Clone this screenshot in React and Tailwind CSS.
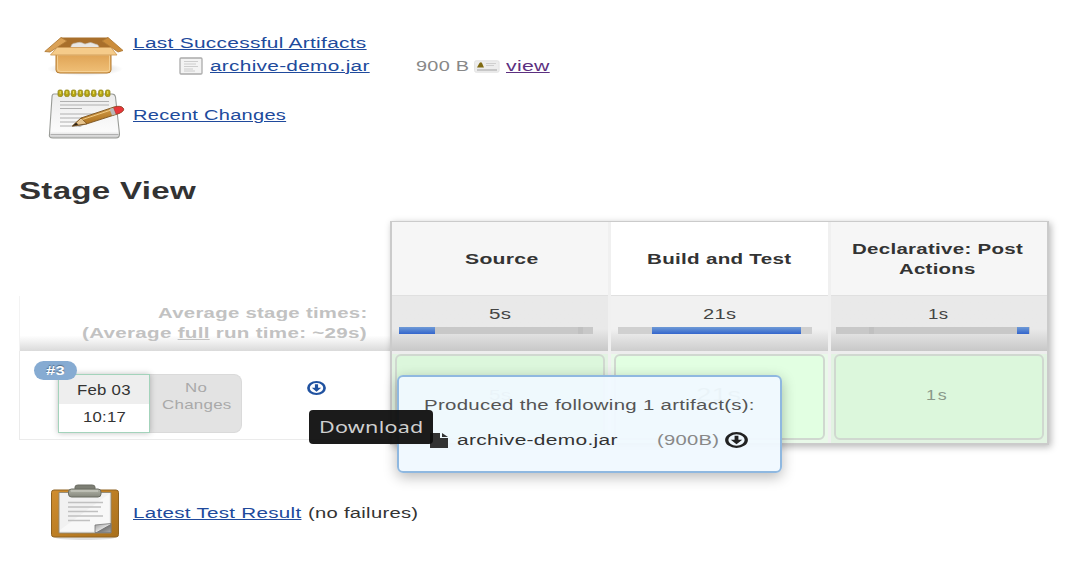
import { useLayoutEffect, useRef, useState } from "react";

// Text stretched horizontally so that it fills the width given in its classes.
function Wide({ className = "", children }) {
  const outer = useRef(null);
  const inner = useRef(null);
  const [k, setK] = useState(1);
  useLayoutEffect(() => {
    const natural = inner.current.offsetWidth;
    if (natural) setK(outer.current.offsetWidth / natural);
  }, []);
  return (
    <span ref={outer} className={"block shrink-0 whitespace-nowrap " + className}>
      <span ref={inner} className="inline-block origin-left whitespace-nowrap" style={{ transform: `scaleX(${k})` }}>
        {children}
      </span>
    </span>
  );
}

function BoxIcon() {
  return (
    <svg width="82" height="42" viewBox="0 0 82 42" className="block">
      <defs>
        <linearGradient id="bx" x1="0" y1="0" x2="0" y2="1">
          <stop offset="0" stopColor="#dfa354" />
          <stop offset="1" stopColor="#f0c078" />
        </linearGradient>
        <radialGradient id="bs">
          <stop offset="0" stopColor="#999" stopOpacity=".6" />
          <stop offset="1" stopColor="#999" stopOpacity="0" />
        </radialGradient>
      </defs>
      <ellipse cx="41" cy="34" rx="38" ry="7" fill="url(#bs)" />
      <path d="M17 3H64L68 18H13Z" fill="#a96f2b" stroke="#a8712d" />
      <path d="M27 14Q26 8 32 8Q36 6 41 9Q47 6 51 9Q56 9 55 16H27Z" fill="#e9e7e4" stroke="#c0b6a8" strokeWidth=".6" />
      <path d="M17 2.500L.8 16.500L6 17L23 6Z" fill="#dba257" stroke="#b07a36" strokeWidth=".9" />
      <path d="M64 2.500L79 15.500L74 17L58 6Z" fill="#cc8d3b" stroke="#b07a36" strokeWidth=".9" />
      <path d="M12 19H67V35Q67 38 63 38H16Q12 38 12 35Z" fill="url(#bx)" stroke="#b47a30" />
      <path d="M13.500 20H65.500V35Q65 36.500 62 36.500H17Q13.500 36.500 13.500 34Z" fill="none" stroke="#f7d59c" strokeWidth=".8" />
      <path d="M13 12.500H67L73 20H6.500Z" fill="#f5cb8a" stroke="#d09c58" strokeWidth=".9" />
    </svg>
  );
}

function NotepadIcon() {
  return (
    <svg width="80" height="52" viewBox="0 0 80 52" className="block">
      <defs>
        <linearGradient id="np" x1="0" y1="0" x2="0" y2="1">
          <stop offset="0" stopColor="#ececec" />
          <stop offset=".85" stopColor="#fbfbfb" />
          <stop offset="1" stopColor="#c8c8c8" />
        </linearGradient>
        <linearGradient id="pc" x1="0" y1="0" x2="0.3" y2="1">
          <stop offset="0" stopColor="#e0ad5a" />
          <stop offset="1" stopColor="#a86b18" />
        </linearGradient>
      </defs>
      <path d="M8 5H66Q69 5 69.500 8L73.500 45Q73.500 49 70 49H7Q2.500 49 3.500 45L6 8Q6 5 8 5Z" fill="url(#np)" stroke="#999b97" strokeWidth="1.100" />
      <path d="M4.500 45.500H72.500" stroke="#b0b0b0" strokeWidth="1" />
      <path d="M14 12.500H63M14 16H63M14 19.500H36M14 25H63M14 29H50M14 33H42M14 37H31" stroke="#b0b0b0" strokeWidth="1.100" />
      {[12, 18.700, 25.400, 32.100, 38.800, 45.500, 52.600, 59.500].map((x) => (
        <g key={x}>
          <rect x={x} y="1" width="4.500" height="6.500" rx="1.500" fill="#b6a512" stroke="#91851c" strokeWidth=".8" />
          <path d={`M${x + 2.200} 2V5`} stroke="#ece36a" strokeWidth="1" />
        </g>
      ))}
      <path d="M28 37L44 33L34 38Z" fill="#777" opacity=".5" />
      <path d="M26.500 37L35 29L68 18Q75 16 77.500 19.500Q78.500 22 73 24.500L41 34.800Z" fill="url(#pc)" stroke="#7a5420" strokeWidth=".9" />
      <path d="M26.500 37L35 29L41 34.800Z" fill="#e6c48e" stroke="#6b4411" strokeWidth=".7" />
      <path d="M26.500 37L30 33.700L32.500 35.600Z" fill="#2b2116" />
      <path d="M36.500 30.500L65 21" stroke="#f0c983" strokeWidth="1" />
      <path d="M63.500 20L67.500 18.700L70.500 25L66 26.500Z" fill="#b9b9b9" />
      <path d="M67.500 18.400Q75 16.200 77.300 19.500Q78.500 22 73 24.300L70 25Z" fill="#e8363a" stroke="#a33" strokeWidth=".5" />
    </svg>
  );
}

function ClipboardIcon() {
  return (
    <svg width="72" height="57" viewBox="0 0 72 57" className="block">
      <defs>
        <linearGradient id="cb" x1="0" y1="0" x2="1" y2="1">
          <stop offset="0" stopColor="#d08d2e" />
          <stop offset="1" stopColor="#a9701c" />
        </linearGradient>
        <linearGradient id="cl" x1="0" y1="0" x2="0" y2="1">
          <stop offset="0" stopColor="#b4b6aa" />
          <stop offset="1" stopColor="#85877c" />
        </linearGradient>
        <linearGradient id="fold" x1="0" y1="0" x2="1" y2="1">
          <stop offset="0" stopColor="#999" />
          <stop offset=".5" stopColor="#ddd" />
          <stop offset=".55" stopColor="#777" />
          <stop offset="1" stopColor="#aaa" />
        </linearGradient>
      </defs>
      <ellipse cx="36" cy="53.500" rx="30" ry="2.500" fill="#ccc" opacity=".6" />
      <rect x="2.500" y="6" width="67" height="47" rx="2.500" fill="url(#cb)" stroke="#8f6221" />
      <path d="M10 8.500H62V49H10Z" fill="#f1f1f1" stroke="#8f8876" strokeWidth=".9" />
      <path d="M11 46L60 10V47H11Z" fill="#fbfbfb" opacity=".7" />
      <path d="M19 18.500H54M19 23H52M19 27.500H49M19 32H54M19 36.500H41" stroke="#c0c0c0" strokeWidth="1.300" />
      <path d="M46 41L62 39.500V48.500H46Z" fill="url(#fold)" stroke="#777" strokeWidth=".8" />
      <path d="M26 8V3Q26 1 29 1H43Q46 1 46 3V8Z" fill="#7c7e74" stroke="#6b6d63" />
      <rect x="19.500" y="5" width="32.500" height="8" rx="3" fill="url(#cl)" stroke="#6b6d63" />
      <path d="M22 7H49" stroke="#d2d3ca" strokeWidth="1" />
    </svg>
  );
}

function TextFileIcon() {
  return (
    <svg width="25" height="19" viewBox="0 0 25 19" className="block">
      <rect x="1" y="1" width="22" height="16" rx="1" fill="#f3f3f3" stroke="#ababab" strokeWidth="1.300" />
      <path d="M5 4.500H19M5 7H17M5 9.500H19M5 12H14M5 14H16" stroke="#c8c8c8" strokeWidth=".9" />
    </svg>
  );
}

function FingerprintIcon() {
  return (
    <svg width="26" height="13" viewBox="0 0 26 13" className="block">
      <rect x=".6" y=".8" width="24.500" height="11.400" rx="1.500" fill="#ededed" stroke="#e2e2e2" />
      <path d="M3 7.500L5.500 3Q7 1.500 8 3L10 7.500Z" fill="#7f6a12" />
      <path d="M12 3.500H22M12 5.500H20" stroke="#cfcfcf" />
      <path d="M3 10H23" stroke="#adadad" strokeWidth="1.200" />
    </svg>
  );
}

function DownIcon({ className }) {
  return (
    <svg viewBox="0 0 24 24" preserveAspectRatio="none" className={"block shrink-0 " + className}>
      <circle cx="12" cy="12" r="10.200" fill="none" stroke="currentColor" strokeWidth="3.400" />
      <path d="M10 5.500H14V11.500H18L12 18.300L6 11.500H10Z" fill="currentColor" />
    </svg>
  );
}

const underlined = "[&>span]:underline [&>span]:decoration-1 [&>span]:underline-offset-1";
const link = "text-[#204a9c] " + underlined;

function Meter({ className, bar, mark, alt }) {
  return (
    <div className={"mr-auto flex h-[7px] w-[194px] " + className + (alt ? " bg-[#d0d0d0]" : " bg-[#c8c8c8]")}>
      {mark && <div className={"h-[7px] w-[5px] bg-[#c0c0c0] " + mark} />}
      <div className={"h-[7px] bg-linear-to-b from-[#6f9ad6] to-[#3465cc] " + bar} />
    </div>
  );
}

function Column({ title, time, meter, alt, cell, last }) {
  return (
    <div className={"flex flex-col " + (last ? "w-[217px]" : "w-[220px] border-r-[3px] border-[#f0f0f0]")}>
      <div className={"flex h-[74px] flex-col items-center justify-center border-b border-[#e0e0e0] pt-px font-bold text-[#333] " + (alt ? "bg-white" : "bg-[#f6f6f6]")}>
        {title}
      </div>
      <div className={"flex h-[55px] flex-col bg-linear-to-b from-60% " + (alt ? "from-[#f1f1f1] to-[#cdcdcd]" : "from-[#e9e9e9] to-[#c8c8c8]")}>
        <div className="flex h-[31px] items-center justify-center pt-1 text-[#444]">{time}</div>
        {meter}
      </div>
      <div className={"h-[92px] border-t-[3px] border-[#ededed] px-[3px] pb-[3px] " + (alt ? "bg-[#e9f9e9]" : "bg-[#e2f3e2]")}>
        <div className={"flex h-[86px] items-center justify-center rounded-md border-2 border-[#d0d8d0] pb-[4px] text-[#8a998a] " + (alt ? "bg-[#e2ffe2]" : "bg-[#dcf7dc]")}>
          {cell}
        </div>
      </div>
    </div>
  );
}

export default function App() {
  return (
    <div className="relative h-[561px] w-[1084px] overflow-hidden bg-white font-['Liberation_Sans',Arial,sans-serif] text-[14px] leading-5 tracking-[0.2px] text-[#333]">
      <div className="flex h-[86px] pt-[33px]">
        <div className="w-[133px] pt-[2px] pl-[44px]"><BoxIcon /></div>
        <div>
          <Wide className={"w-[234px] " + link}>Last Successful Artifacts</Wide>
          <div className="flex items-center pt-[3px]">
            <div className="w-[77px] pl-[46px]"><TextFileIcon /></div>
            <Wide className={"w-[159px] " + link}>archive-demo.jar</Wide>
            <Wide className="ml-[47px] w-[54px] text-[#888]">900 B</Wide>
            <div className="w-[36px] pl-1"><FingerprintIcon /></div>
            <Wide className={"w-[44px] text-[#5c3080] " + underlined}>view</Wide>
          </div>
        </div>
      </div>
      <div className="flex h-[88px] pt-[3px]">
        <div className="w-[133px] pl-[46px]"><NotepadIcon /></div>
        <div className="pt-[16px]"><Wide className={"w-[153px] " + link}>Recent Changes</Wide></div>
      </div>
      <h2 className="h-[47px] pl-[19px] text-[23px] leading-[34px] font-bold">
        <Wide className="w-[177px]">Stage View</Wide>
      </h2>

      <div className="flex h-[224px] pl-[19px]">
        <div className="w-[371px] pt-[75px]">
          <div className="flex h-[55px] flex-col items-end border-l border-[#f3f3f3] bg-linear-to-b from-white from-72% to-[#dadada] pt-[7px] pr-[23px] font-bold text-[#c2c2c2]">
            <Wide className="w-[209px]">Average stage times:</Wide>
            <Wide className="w-[285px]">(Average <span className="underline">full</span> run time: ~29s)</Wide>
          </div>
          <div className="flex h-[89px] border-b border-l border-[#ebebeb] bg-white pt-[23px] pl-[38px]">
            <div className="relative z-10 flex h-[59px] w-[92px] flex-col border border-[#a3d3bb] bg-white shadow-[0_0_6px_rgba(0,0,0,.25)]">
              <div className="flex h-[29px] items-center justify-center bg-[#eeeeee] pt-px"><Wide className="w-[54px]">Feb 03</Wide></div>
              <div className="flex h-[28px] items-center justify-center pb-[2px]"><Wide className="w-[43px]">10:17</Wide></div>
              <div className="absolute -top-[14px] -left-[25px] flex h-[19px] w-[43px] items-center justify-center rounded-full bg-[#86abd2] text-[13px] font-bold text-white [text-shadow:0_-1px_1px_rgba(0,0,0,.4)]">
                <Wide className="w-[19px]">#3</Wide>
              </div>
            </div>
            <div className="flex h-[59px] w-[92px] flex-col items-center rounded-r-lg border border-l-0 border-[#dadada] bg-[#e3e3e3] pt-[4px] pl-px text-[13px] leading-[17px] text-[#a9a9a9]">
              <Wide className="w-[22px]">No</Wide>
              <Wide className="w-[69px]">Changes</Wide>
            </div>
            <div className="pt-[7px] pl-[65px] text-[#2052a0]"><DownIcon className="h-[14px] w-[19px]" /></div>
          </div>
        </div>
        <div className="flex h-[224px] w-[659px] border-2 border-t border-[#cbcbcb] shadow-[2px_2px_7px_rgba(0,0,0,.28)]">
          <Column
            title={<Wide className="ml-[3px] w-[74px]">Source</Wide>}
            time={<Wide className="w-[22px]">5s</Wide>}
            meter={<Meter className="ml-[7px]" bar="-order-1 w-[36px]" mark="order-2 ml-[143px]" />}
            cell={<Wide className="w-[22px]">5s</Wide>}
          />
          <Column
            alt
            title={<Wide className="w-[144px]">Build and Test</Wide>}
            time={<Wide className="w-[33px]">21s</Wide>}
            meter={<Meter alt className="ml-[7px]" bar="ml-[34px] w-[149px]" />}
            cell={<Wide className="w-[46px] text-[18px]">21s</Wide>}
          />
          <Column
            last
            title={<><Wide className="mr-[3px] w-[171px]">Declarative: Post</Wide><Wide className="mr-[3px] w-[77px]">Actions</Wide></>}
            time={<Wide className="mr-[2px] w-[20px]">1s</Wide>}
            meter={<Meter className="ml-[5px]" bar="ml-[143px] w-[12px]" mark="ml-[33px]" />}
            cell={<Wide className="mr-[3px] w-[23px] tracking-[1.5px]">1s</Wide>}
          />
        </div>
      </div>

      <div className="flex pt-[39px]">
        <div className="w-[133px] pl-[49px]"><ClipboardIcon /></div>
        <div className="flex gap-[6px] pt-[19px]">
          <Wide className={"w-[169px] " + link}>Latest Test Result</Wide>
          <Wide className="w-[111px]">(no failures)</Wide>
        </div>
      </div>

      <div className="absolute top-[375px] left-[397px] z-20 h-[98px] w-[385px] rounded-md border-2 border-[#8fb8e0] bg-[#f0f9ff]/94 pt-[18px] pl-[25px] shadow-[0_4px_14px_rgba(0,0,0,.28)]">
        <Wide className="w-[331px] text-[#555]">Produced the following 1 artifact(s):</Wide>
        <div className="flex items-center pt-[15px]">
          <svg width="18" height="15" viewBox="0 0 18 15" className="ml-[6px] block">
            <path d="M0 0H10V5H18V15H0Z" fill="#333" />
            <path d="M12 0L18 4H12Z" fill="#333" />
          </svg>
          <Wide className="ml-[9px] w-[160px]">archive-demo.jar</Wide>
          <Wide className="ml-[40px] w-[62px] text-[#888]">(900B)</Wide>
          <DownIcon className="ml-[6px] h-[16px] w-[23px] text-[#222]" />
        </div>
      </div>

      <div className="absolute top-[410px] left-[309px] z-30 flex h-[34px] w-[124px] items-center justify-center rounded bg-[#0f0f0f]/95 font-['Noto_Sans','Open_Sans',sans-serif] text-[16px] text-[#cfcfcf]">
        <Wide className="w-[105px]">Download</Wide>
      </div>
    </div>
  );
}
